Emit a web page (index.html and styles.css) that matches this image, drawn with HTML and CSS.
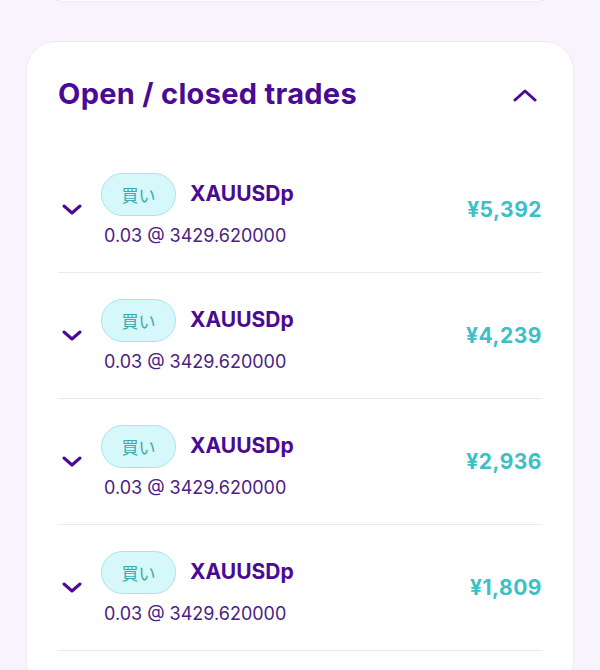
FILE: index.html
```html
<!DOCTYPE html>
<html lang="ja">
<head>
  <meta charset="UTF-8">
  <meta name="viewport" content="width=device-width, initial-scale=1.0">
  <title>Open / closed trades</title>
  <link rel="stylesheet" href="styles.css">
</head>
<body>
  <div class="page">
    <div class="card card-prev"></div>

    <section class="card trades">
      <div class="trades-head">
        <h2>Open / closed trades</h2>
        <svg class="chev" width="24" height="14" viewBox="0 0 24 14"><path d="M2 12 L12 3 L22 12" fill="none" stroke="#4a0a94" stroke-width="3" stroke-linecap="round" stroke-linejoin="round"/></svg>
      </div>

      <ul class="trade-list">
        <li class="trade">
          <svg class="chev-down" width="20" height="12" viewBox="0 0 20 12"><path d="M2 2 L10 9 L18 2" fill="none" stroke="#4a0a94" stroke-width="3" stroke-linecap="round" stroke-linejoin="round"/></svg>
          <div class="trade-info">
            <div class="trade-top">
              <span class="pill">買い</span>
              <span class="symbol">XAUUSDp</span>
            </div>
            <div class="trade-sub">0.03 @ 3429.620000</div>
          </div>
          <div class="amount">¥5,392</div>
        </li>
        <li class="trade">
          <svg class="chev-down" width="20" height="12" viewBox="0 0 20 12"><path d="M2 2 L10 9 L18 2" fill="none" stroke="#4a0a94" stroke-width="3" stroke-linecap="round" stroke-linejoin="round"/></svg>
          <div class="trade-info">
            <div class="trade-top">
              <span class="pill">買い</span>
              <span class="symbol">XAUUSDp</span>
            </div>
            <div class="trade-sub">0.03 @ 3429.620000</div>
          </div>
          <div class="amount">¥4,239</div>
        </li>
        <li class="trade">
          <svg class="chev-down" width="20" height="12" viewBox="0 0 20 12"><path d="M2 2 L10 9 L18 2" fill="none" stroke="#4a0a94" stroke-width="3" stroke-linecap="round" stroke-linejoin="round"/></svg>
          <div class="trade-info">
            <div class="trade-top">
              <span class="pill">買い</span>
              <span class="symbol">XAUUSDp</span>
            </div>
            <div class="trade-sub">0.03 @ 3429.620000</div>
          </div>
          <div class="amount">¥2,936</div>
        </li>
        <li class="trade">
          <svg class="chev-down" width="20" height="12" viewBox="0 0 20 12"><path d="M2 2 L10 9 L18 2" fill="none" stroke="#4a0a94" stroke-width="3" stroke-linecap="round" stroke-linejoin="round"/></svg>
          <div class="trade-info">
            <div class="trade-top">
              <span class="pill">買い</span>
              <span class="symbol">XAUUSDp</span>
            </div>
            <div class="trade-sub">0.03 @ 3429.620000</div>
          </div>
          <div class="amount">¥1,809</div>
        </li>
      </ul>
    </section>
  </div>
</body>
</html>
```

FILE: styles.css
```css
/* base */
html, body {
  margin: 0;
  height: 100%;
  overflow: hidden;
}

body {
  font-family: Inter, "Noto Sans", "Noto Sans CJK JP", sans-serif;
  background-color: #f8f3fd;
  color: #4a0a94;
}

.page {
  padding: 0 26px;
}

.card {
  background-color: #fff;
  border: 1px solid #efe8f5;
  border-radius: 30px;
}

/* bottom of the card above, mostly scrolled away */
.card-prev {
  height: 30px;
  margin: -29px 14px 0;
  border-radius: 0 0 24px 24px;
  border-top: none;
}

.trades {
  margin-top: 39px;
  padding: 0 31px 40px;
}

.trades-head {
  display: flex;
  justify-content: space-between;
  align-items: center;
  height: 105px;
}

.trades-head h2 {
  margin: 0 0 2px;
  font-size: 29px;
  font-weight: 700;
  letter-spacing: 0.3px;
  color: #4a0a94;
}

.chev {
  margin-right: 5px;
}

.trade-list {
  list-style: none;
  margin: 0;
  padding: 0;
}

.trade {
  display: flex;
  align-items: center;
  height: 125px;
  border-bottom: 1px solid #ebe8ef;
}

.chev-down {
  margin-left: 4px;
  width: 20px;
  flex-shrink: 0;
}

.trade-info {
  flex: 1;
  margin-left: 19px;
}

.trade-top {
  display: flex;
  align-items: center;
  gap: 14px;
}

.pill {
  display: inline-flex;
  align-items: center;
  justify-content: center;
  width: 73px;
  height: 41px;
  border: 1px solid #a8e4ea;
  border-radius: 22px;
  background-color: #d6f8fb;
  color: #3aaab4;
  font-family: "Noto Sans CJK JP", sans-serif;
  font-size: 17px;
}

.symbol {
  font-size: 21px;
  font-weight: 700;
  color: #4a0a94;
  margin-top: -2px;
}

.trade-sub {
  margin-top: 9px;
  padding-left: 3px;
  font-size: 18px;
  line-height: 22px;
  color: #4b2182;
}

.amount {
  font-size: 21px;
  font-weight: 700;
  letter-spacing: 0.5px;
  color: #3dbfc8;
}
```
